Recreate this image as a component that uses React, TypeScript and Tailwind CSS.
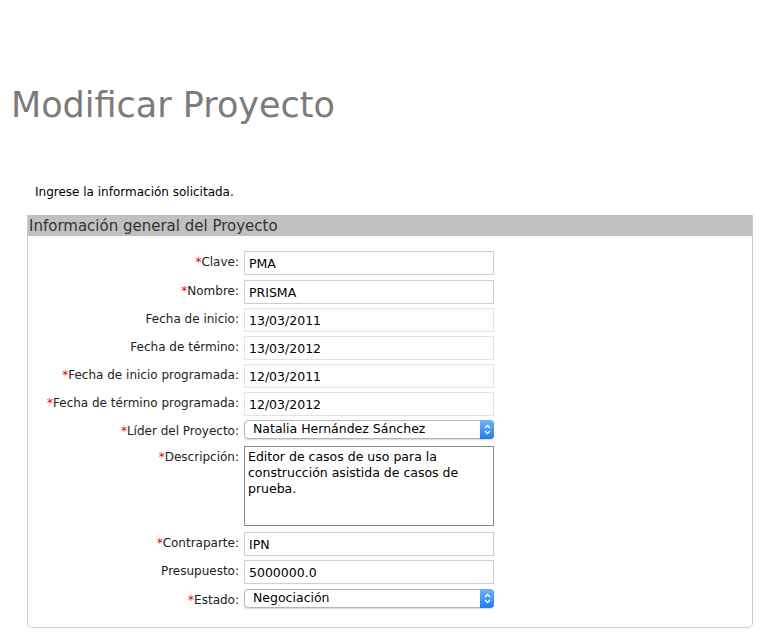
const font = { fontFamily: '"DejaVu Sans", Verdana, sans-serif' };

type Field = {
  label: string;
  required?: boolean;
  value: string;
  kind?: "input" | "soft" | "select" | "textarea";
  gap?: string;
};

const fields: Field[] = [
  { label: "Clave:", required: true, value: "PMA" },
  { label: "Nombre:", required: true, value: "PRISMA", gap: "mt-[5px]" },
  { label: "Fecha de inicio:", value: "13/03/2011", kind: "soft" },
  { label: "Fecha de término:", value: "13/03/2012", kind: "soft" },
  { label: "Fecha de inicio programada:", required: true, value: "12/03/2011", kind: "soft" },
  { label: "Fecha de término programada:", required: true, value: "12/03/2012", kind: "soft" },
  { label: "Líder del Proyecto:", required: true, value: "Natalia Hernández Sánchez", kind: "select" },
  {
    label: "Descripción:",
    required: true,
    value: "Editor de casos de uso para la construcción asistida de casos de prueba.",
    kind: "textarea",
    gap: "mt-[7px]",
  },
  { label: "Contraparte:", required: true, value: "IPN", gap: "mt-[6px]" },
  { label: "Presupuesto:", value: "5000000.0" },
  { label: "Estado:", required: true, value: "Negociación", kind: "select", gap: "mt-[5px]" },
];

const SelectBox = ({ value }: { value: string }) => (
  <div className="flex h-[19px] w-[250px] items-center justify-between rounded-[4px] border border-[#b5b5b5] bg-white shadow-[0_1px_1px_rgba(0,0,0,0.15)]">
    <span className="pl-[8px] text-[12.5px] text-black">{value}</span>
    <span className="flex h-[19px] w-[14px] -mr-px -mt-px items-center justify-center rounded-r-[4px] bg-gradient-to-b from-[#6cb3fa] to-[#1f7cf0]">
      <svg width="7" height="11" viewBox="0 0 7 11">
        <path d="M1 4 L3.5 1.5 L6 4" stroke="white" strokeWidth="1.3" fill="none" />
        <path d="M1 7 L3.5 9.5 L6 7" stroke="white" strokeWidth="1.3" fill="none" />
      </svg>
    </span>
  </div>
);

const FormRow = ({ field }: { field: Field }) => {
  const kind = field.kind ?? "input";
  return (
    <div className={`flex items-start gap-[5px] ${field.gap ?? "mt-[4px]"}`}>
      <div className="w-[211px] pt-[3px] text-right text-[12px] leading-[16px] text-[#222]">
        {field.required && <span className="text-[#e00]">*</span>}
        {field.label}
      </div>
      {kind === "select" ? (
        <SelectBox value={field.value} />
      ) : kind === "textarea" ? (
        <div className="h-[80px] w-[250px] border border-[#8a8a8a] px-[3px] pt-[2px] text-[12.5px] leading-[16px] text-black">
          {field.value}
        </div>
      ) : (
        <div
          className={
            kind === "soft"
              ? "h-[24px] w-[250px] border border-[#e3e3e3] px-[4px] pt-[5px] text-[12.5px] leading-[14px] text-black"
              : "h-[24px] w-[250px] border border-[#cfcfcf] px-[4px] pt-[5px] text-[12.5px] leading-[14px] text-black"
          }
        >
          {field.value}
        </div>
      )}
    </div>
  );
};

const App = () => {
  return (
    <div className="min-h-[635px] w-[776px] bg-white" style={font}>
      <div className="pt-[84px] pl-[11px]">
        <h1 className="text-[35px] leading-[42px] text-[#7b7b7b]">Modificar Proyecto</h1>
      </div>
      <p className="mt-[58px] pl-[35px] text-[12px] leading-[16px] text-black">Ingrese la información solicitada.</p>
      <section className="mt-[15px] ml-[27px] w-[726px] rounded-b-[5px] border border-t-0 border-[#cfcfcf]">
        <div className="h-[21px] bg-[#c0c0c0] pl-[1px] text-[15px] leading-[22px] text-[#333]">
          Información general del Proyecto
        </div>
        <div className="flex flex-col pt-[11px] pb-[19px]">
          {fields.map((f) => (
            <FormRow key={f.label} field={f} />
          ))}
        </div>
      </section>
    </div>
  );
};

export default App;
